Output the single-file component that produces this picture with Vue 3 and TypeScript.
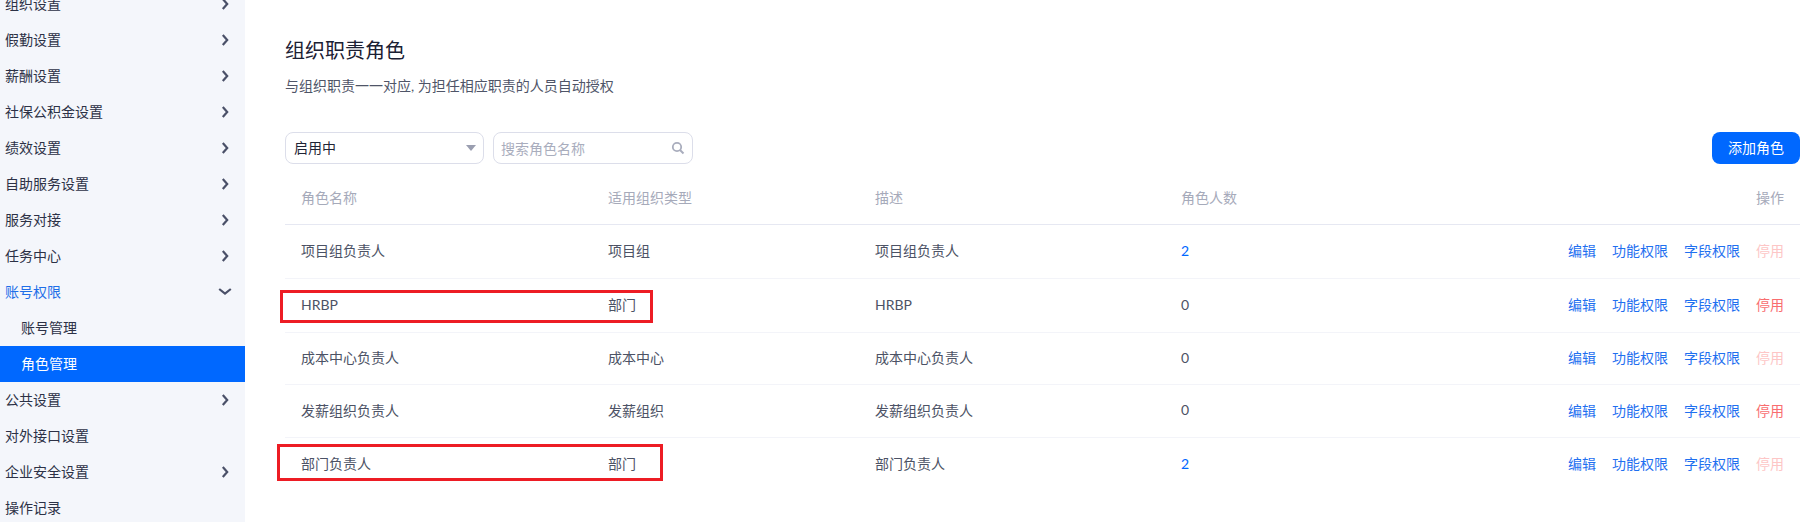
<script setup lang="ts">
interface MenuItem { label: string; arrow?: 'right' | 'down'; kind?: 'open' | 'sub' | 'active' }
interface Row { name: string; type: string; desc: string; count: number; stopOn: boolean; marked?: string }

const menu: MenuItem[] = [
  { label: '组织设置', arrow: 'right' },
  { label: '假勤设置', arrow: 'right' },
  { label: '薪酬设置', arrow: 'right' },
  { label: '社保公积金设置', arrow: 'right' },
  { label: '绩效设置', arrow: 'right' },
  { label: '自助服务设置', arrow: 'right' },
  { label: '服务对接', arrow: 'right' },
  { label: '任务中心', arrow: 'right' },
  { label: '账号权限', arrow: 'down', kind: 'open' },
  { label: '账号管理', kind: 'sub' },
  { label: '角色管理', kind: 'active' },
  { label: '公共设置', arrow: 'right' },
  { label: '对外接口设置' },
  { label: '企业安全设置', arrow: 'right' },
  { label: '操作记录' },
]

const rows: Row[] = [
  { name: '项目组负责人', type: '项目组', desc: '项目组负责人', count: 2, stopOn: false },
  { name: 'HRBP', type: '部门', desc: 'HRBP', count: 0, stopOn: true, marked: 'one' },
  { name: '成本中心负责人', type: '成本中心', desc: '成本中心负责人', count: 0, stopOn: false },
  { name: '发薪组织负责人', type: '发薪组织', desc: '发薪组织负责人', count: 0, stopOn: true },
  { name: '部门负责人', type: '部门', desc: '部门负责人', count: 2, stopOn: false, marked: 'two' },
]
</script>

<template>
  <div class="page">
    <aside class="side">
      <div class="menu">
        <div v-for="m in menu" :key="m.label" class="item" :class="m.kind">
          <span>{{ m.label }}</span>
          <svg v-if="m.arrow === 'right'" class="chev" width="14" height="14" viewBox="0 0 14 14">
            <path d="M4.8 2 L9.2 7 L4.8 12" fill="none" stroke="#4a5068" stroke-width="2.2" />
          </svg>
          <svg v-if="m.arrow === 'down'" class="chev" width="14" height="14" viewBox="0 0 14 14">
            <path d="M1.2 4 L7 8.6 L12.8 4" fill="none" stroke="#4a5068" stroke-width="2.2" />
          </svg>
        </div>
      </div>
    </aside>
    <main class="main">
      <h1 class="title">组织职责角色</h1>
      <p class="desc">与组织职责一一对应, 为担任相应职责的人员自动授权</p>
      <div class="toolbar">
        <div class="select">
          <span>启用中</span>
          <i class="caret"></i>
        </div>
        <div class="search">
          <span>搜索角色名称</span>
          <svg width="14" height="14" viewBox="0 0 14 14">
            <circle cx="6" cy="6" r="4.2" fill="none" stroke="#a9adbd" stroke-width="1.8" />
            <path d="M9 9 L12.5 12.5" stroke="#a9adbd" stroke-width="2" />
          </svg>
        </div>
        <button class="add">添加角色</button>
      </div>
      <div class="table">
        <div class="tr head">
          <span>角色名称</span>
          <span>适用组织类型</span>
          <span>描述</span>
          <span>角色人数</span>
          <span class="ops">操作</span>
        </div>
        <div v-for="r in rows" :key="r.name" class="tr body">
          <span>{{ r.name }}</span>
          <span>{{ r.type }}</span>
          <span>{{ r.desc }}</span>
          <span :class="{ link: r.count > 0 }">{{ r.count }}</span>
          <span class="ops">
            <a>编辑</a><a>功能权限</a><a>字段权限</a>
            <a class="stop" :class="{ on: r.stopOn }">停用</a>
          </span>
          <i v-if="r.marked" class="mark" :class="r.marked"></i>
        </div>
      </div>
    </main>
  </div>
</template>

<style>
html, body { margin: 0; background: #fff; overflow: hidden; }
</style>

<style scoped>
.page {
  display: flex;
  width: 1808px;
  height: 522px;
  overflow: hidden;
  font-family: Lato, "Noto Sans CJK SC", sans-serif;
  font-size: 14px;
  color: #1f2436;
}
.side {
  flex: none;
  width: 245px;
  background: #f4f6fb;
  overflow: hidden;
}
.menu { margin-top: -14px; }
.item {
  box-sizing: border-box;
  display: flex;
  align-items: center;
  justify-content: space-between;
  height: 36px;
  padding: 0 13px 2px 5px;
  color: #2c3146;
}
.chev { flex: none; margin-top: 2px; }
.item.open { color: #1f6fe8; }
.item.sub, .item.active { padding-left: 21px; }
.item.active { background: #0068ff; color: #fff; }
.main {
  flex: 1;
  min-width: 0;
  padding: 34px 8px 0 40px;
}
.title {
  margin: 0;
  height: 34px;
  font-size: 20px;
  font-weight: 400;
  line-height: 32px;
  color: #1b2033;
}
.desc {
  margin: 2px 0 0;
  height: 32px;
  font-size: 14px;
  line-height: 32px;
  color: #4f5568;
}
.toolbar {
  display: flex;
  gap: 9px;
  margin-top: 30px;
}
.select, .search {
  box-sizing: border-box;
  display: flex;
  align-items: center;
  justify-content: space-between;
  width: 199px;
  height: 32px;
  padding: 0 7px 2px 8px;
  border: 1px solid #dcdeea;
  border-radius: 8px;
}
.search { width: 200px; color: #a9adbd; padding: 0 7px 0 7px; }
.caret {
  width: 0;
  height: 0;
  border-left: 5px solid transparent;
  border-right: 5px solid transparent;
  border-top: 6px solid #9a9eb0;
  margin-top: 2px;
}
.add {
  margin-left: auto;
  width: 88px;
  height: 32px;
  border: 0;
  padding: 0 0 2px;
  border-radius: 8px;
  background: #0068ff;
  color: #fff;
  font: inherit;
}
.tr {
  position: relative;
  display: grid;
  grid-template-columns: 307px 267px 306px 1fr auto;
  align-items: center;
  padding: 0 16px;
}
.head {
  height: 54px;
  padding-top: 6px;
  color: #a6aaba;
  border-bottom: 1px solid #e6e8f2;
}
.body {
  height: 53px;
  box-sizing: border-box;
  padding-bottom: 3px;
  color: #4c5265;
  border-bottom: 1px solid #f3f4f9;
}
.body:nth-child(2), .body:nth-child(3) { height: 54px; }
.body:nth-child(4) { height: 52px; }
.body:last-child { border-bottom: 0; }
.link { color: #0068ff; }
.ops { display: flex; gap: 16px; justify-content: flex-end; }
.ops a { color: #1f70f0; }
.ops .stop { color: #fdc6c6; }
.ops .stop.on { color: #f96d6f; }
.mark {
  position: absolute;
  box-sizing: border-box;
  border: 3px solid #ed1c24;
  pointer-events: none;
}
.mark.one { left: -5px; top: 11px; width: 373px; height: 33px; }
.mark.two { left: -8px; top: 6px; width: 386px; height: 37px; }
</style>
